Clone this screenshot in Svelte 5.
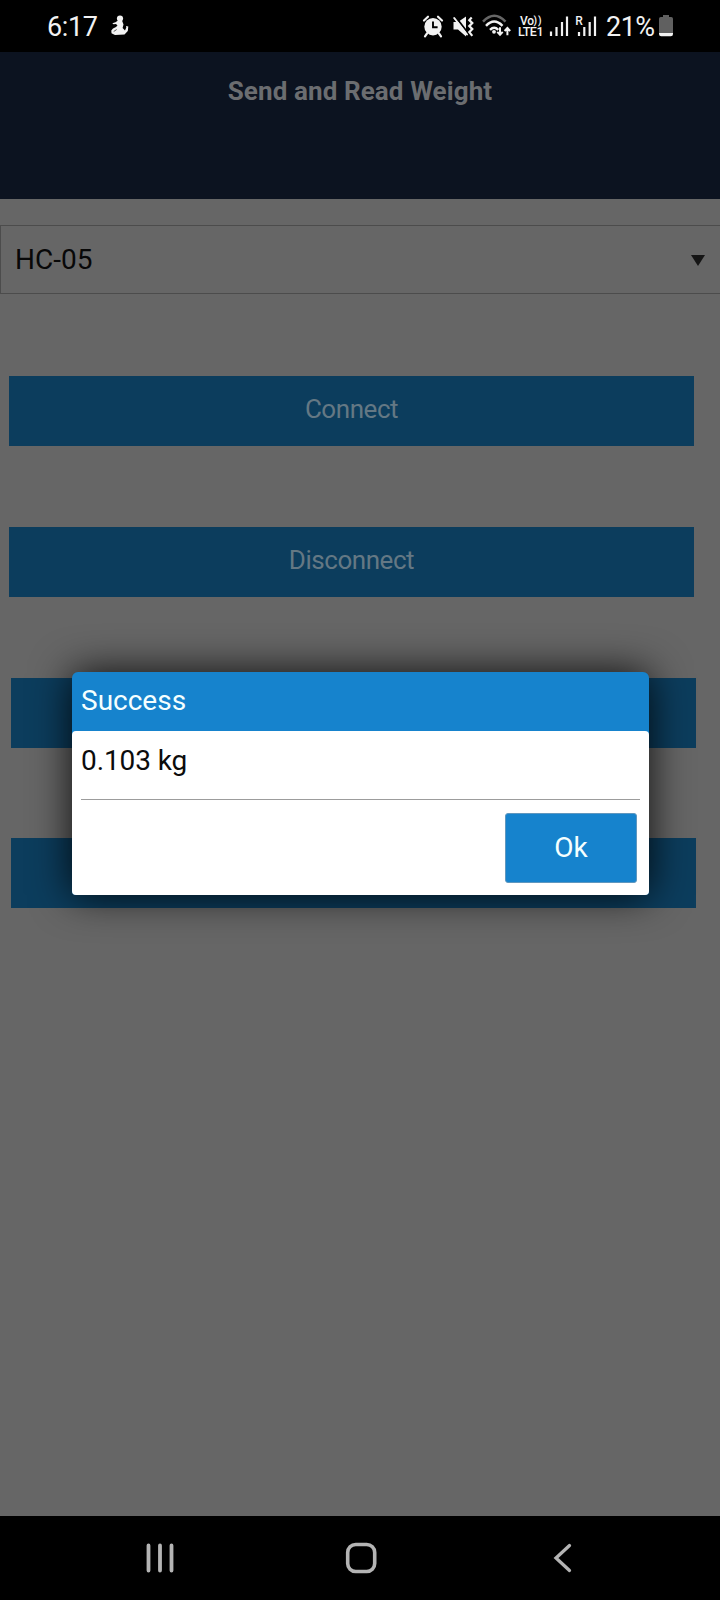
<script>
  const actions = ['Connect', 'Disconnect', '', ''];
</script>

<div class="phone">
  <div class="status">
    <span class="clock">6:17</span>
    <svg class="figure" width="20" height="22" viewBox="0 0 20 22">
      <circle cx="10" cy="3.5" r="3.1" fill="#f2f2f2" />
      <path d="M8 5.500L12 5.500L13.500 9.500L12.600 13L15 15.600L16.300 12.500L16 11L18.300 11.500L17.800 16L14.500 19.500L5 20L1.500 18.200L1.300 15.500L3 13.500L6 12L7.500 10.500L6 9L3.500 9.300L2.300 8.200L5.500 7.300z" fill="#f2f2f2" />
      <path d="M3.700 16.500l3-2" stroke="#333" stroke-width=".8" />
    </svg>
    <span class="grow"></span>
    <svg width="22" height="24" viewBox="422 14 22 24">
      <circle cx="433" cy="26.700" r="8.700" fill="#f2f2f2" />
      <path d="M424 20.500l4-3.800M442 20.500l-4-3.800M427 33.500l-2 2.800M439 33.500l2 2.800" stroke="#f2f2f2" stroke-width="2.200" stroke-linecap="round" />
      <path d="M433 21.500v5.700h4.600" fill="none" stroke="#000" stroke-width="1.900" />
    </svg>
    <svg class="mute" width="22" height="24" viewBox="452 14 22 24">
      <path d="M453.500 22h4.500l8-5.500v20l-8-7h-4.500z" fill="#f2f2f2" />
      <path d="M455.500 16.800l12.500 16.200" stroke="#000" stroke-width="2" />
      <path d="M454.200 18L467 34.500" stroke="#f2f2f2" stroke-width="2" stroke-linecap="round" />
      <path d="M471.700 17.500l-2.400 2.600 3 3-3 3 3 3-3 3 3 3.800" fill="none" stroke="#f2f2f2" stroke-width="2.200" />
    </svg>
    <svg class="wifi" width="30" height="26" viewBox="482 13 30 26" fill="none" stroke="#f2f2f2" stroke-width="2.500">
      <path d="M483 21.700q11.300-11.800 22.500 0" stroke="#666" />
      <path d="M486 25.800q8.200-8.400 16.500 0M490 29.800q4.200-4 8.300 0" />
      <circle cx="494" cy="31.800" r="1.900" fill="#f2f2f2" stroke="none" />
      <path d="M500 27.300v7M497.300 31.800l2.700 3 2.700-3M507.400 35.300v-7M504.600 31l2.800-3 2.800 3" stroke-width="2" />
    </svg>
    <svg class="volte" width="28" height="24" viewBox="517 15 28 24" fill="#f2f2f2" font-weight="500">
      <text x="520" y="25.500" font-size="12" textLength="14">Vo</text>
      <text x="533.500" y="24.700" font-size="10" font-weight="600" textLength="8">))</text>
      <text x="518" y="37" font-size="12.500" textLength="25.500">LTE1</text>
    </svg>
    <svg class="signal" width="20" height="24" viewBox="549 14 20 24" stroke="#f2f2f2" stroke-width="2.200">
      <path d="M551 31.500v4.500M556.500 27v9M562 22v14M567 16.500v19.500" />
    </svg>
    <svg class="roaming" width="24" height="24" viewBox="574 14 24 24">
      <path d="M579 32v4M584.300 27v9M589.700 22v14M595 16.500v19.500" stroke="#f2f2f2" stroke-width="2.200" />
      <text x="575.300" y="24.500" font-size="12" font-weight="500" fill="#f2f2f2">R</text>
    </svg>
    <span class="percent">21%</span>
    <svg width="16" height="24" viewBox="658 14 16 24">
      <path d="M663 15h6v2h2.200q1.800 0 1.800 1.800V33h-14V18.800q0-1.800 1.800-1.800H663z" fill="#606060" />
      <path d="M659 33h14v1q0 2.200-2.200 2.200h-9.600q-2.200 0-2.200-2.200z" fill="#f2f2f2" />
    </svg>
  </div>

  <header>Send and Read Weight</header>

  <main>
    <div class="select"><span>HC-05</span><i></i></div>
    <div class="buttons">
      {#each actions as label}
        <div class="action">{label}</div>
      {/each}
    </div>
  </main>

  <nav>
    <svg width="28" height="30" viewBox="146 1543 28 30" stroke="#b4b4b4" stroke-width="3.800" stroke-linecap="round">
      <path d="M148.500 1545.500v25M160 1545.500v25M171.500 1545.500v25" />
    </svg>
    <svg class="home" width="32" height="32" viewBox="345 1542 32 32">
      <rect x="347.700" y="1544.500" width="27" height="27" rx="8" fill="none" stroke="#b4b4b4" stroke-width="3.600" />
    </svg>
    <svg width="20" height="30" viewBox="553 1543 20 30" fill="none" stroke="#b4b4b4" stroke-width="3.300" stroke-linecap="round">
      <path d="M569.500 1545.500L556 1558l13.500 12.500" />
    </svg>
  </nav>

  <div class="dialog">
    <div class="title">Success</div>
    <div class="body">
      <div class="message">0.103 kg</div>
      <div class="footer"><button>Ok</button></div>
    </div>
  </div>
</div>

<style>
  :global(body) { margin: 0; background: #666; }
  .phone {
    position: relative;
    width: 720px;
    height: 1600px;
    display: flex;
    flex-direction: column;
    overflow: hidden;
    background: #666;
    font-family: Roboto, "Liberation Sans", sans-serif;
    font-size: 28px;
  }
  svg { display: block; flex: none; }
  .status {
    height: 52px;
    box-sizing: border-box;
    padding: 0 46px 0 47px;
    display: flex;
    align-items: center;
    background: #000;
    color: #f2f2f2;
    flex: none;
  }
  .clock { width: 50px; padding-top: 2px; font-size: 27px; letter-spacing: -0.4px; white-space: nowrap; }
  .figure { margin-left: 13px; }
  .grow { flex: 1; }
  .mute { margin-left: 8px; }
  .wifi { margin-left: 8px; }
  .volte { margin-left: 5px; }
  .signal { margin-left: 4px; }
  .roaming { margin-left: 5px; }
  .percent {
    width: 52px;
    margin-left: 8px;
    padding-top: 2px;
    font-size: 27px;
    letter-spacing: -0.5px;
    white-space: nowrap;
  }
  header {
    height: 147px;
    box-sizing: border-box;
    padding-top: 23px;
    background: #0c1320;
    color: #6b6d70;
    font-size: 26px;
    line-height: 32px;
    font-weight: 700;
    letter-spacing: 0.1px;
    text-align: center;
    flex: none;
  }
  main { flex: 1; padding-top: 26px; }
  .select {
    height: 69px;
    box-sizing: border-box;
    border: 1px solid #4c4c4c;
    border-right: 0;
    padding: 0 15px 0 14px;
    display: flex;
    align-items: center;
    justify-content: space-between;
    color: #080808;
  }
  .select i {
    width: 0;
    height: 0;
    margin-top: 2px;
    border: 7px solid transparent;
    border-top: 11px solid #151515;
    border-bottom: 0;
  }
  .buttons { padding: 82px 26px 0 9px; }
  .action {
    height: 70px;
    box-sizing: border-box;
    padding-bottom: 4px;
    margin-bottom: 81px;
    display: flex;
    align-items: center;
    justify-content: center;
    background: #0c3d5d;
    color: #647884;
    font-size: 26px;
    letter-spacing: -0.45px;
  }
  .action:nth-child(n + 3) { margin-left: 2px; margin-right: -2px; }
  .action:nth-child(3) { margin-bottom: 90px; }
  nav {
    height: 84px;
    box-sizing: border-box;
    padding: 0 147px 0 146px;
    display: flex;
    align-items: center;
    justify-content: space-between;
    background: #000;
    flex: none;
  }
  .home { margin-right: 6px; }
  .dialog {
    position: absolute;
    left: 72px;
    top: 672px;
    width: 577px;
    height: 223px;
    display: flex;
    flex-direction: column;
    background: #1683cd;
    border-radius: 6px 6px 4px 4px;
    box-shadow: 0 0 40px rgba(0, 0, 0, 0.88);
  }
  .title { height: 59px; padding-left: 9px; line-height: 58px; color: #f4ffff; }
  .body {
    flex: 1;
    background: #fff;
    border-radius: 4px;
    padding: 0 9px;
    display: flex;
    flex-direction: column;
    color: #0c0c0c;
  }
  .message {
    height: 69px;
    box-sizing: border-box;
    border-bottom: 1px solid #9c9c9c;
    line-height: 60px;
    letter-spacing: -0.1px;
  }
  .footer { flex: 1; display: flex; justify-content: flex-end; padding: 13px 3px 0 0; }
  button {
    width: 132px;
    height: 70px;
    box-sizing: border-box;
    padding: 0 0 2px;
    border: 1px solid #5f97bf;
    border-radius: 3px;
    background: #1683cd;
    color: #f4ffff;
    font: inherit;
  }
</style>
